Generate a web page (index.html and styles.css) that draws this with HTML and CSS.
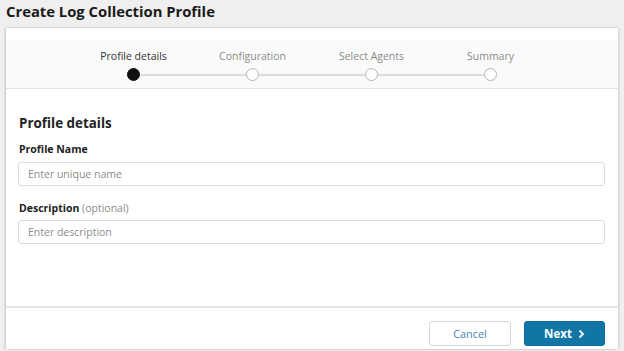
FILE: index.html
```html
<!DOCTYPE html>
<html>
<head>
<meta charset="utf-8">
<link rel="stylesheet" href="styles.css">
</head>
<body>
<h1 class="page-title">Create Log Collection Profile</h1>
<div class="card">
  <div class="card-top"></div>
  <div class="stepper">
    <div class="step active first">
      <div class="step-label">Profile details</div>
      <div class="track"><span class="seg"></span><span class="dot"></span><span class="seg"></span></div>
    </div>
    <div class="step">
      <div class="step-label">Configuration</div>
      <div class="track"><span class="seg"></span><span class="dot"></span><span class="seg"></span></div>
    </div>
    <div class="step">
      <div class="step-label">Select Agents</div>
      <div class="track"><span class="seg"></span><span class="dot"></span><span class="seg"></span></div>
    </div>
    <div class="step last">
      <div class="step-label">Summary</div>
      <div class="track"><span class="seg"></span><span class="dot"></span><span class="seg"></span></div>
    </div>
  </div>
  <div class="content">
    <h2 class="section-title">Profile details</h2>
    <label class="field-label">Profile Name</label>
    <input class="field-input" type="text" placeholder="Enter unique name">
    <label class="field-label desc-label">Description <span class="optional">(optional)</span></label>
    <input class="field-input" type="text" placeholder="Enter description">
  </div>
  <div class="footer">
    <button class="btn btn-cancel">Cancel</button>
    <button class="btn btn-next">Next <svg class="chev" width="8" height="10" viewBox="0 0 8 10"><path d="M2.5 1.5 L6 5 L2.5 8.5" fill="none" stroke="#fff" stroke-width="1.8"/></svg></button>
  </div>
</div>
</body>
</html>
```
FILE: styles.css
```css
html, body {
  margin: 0;
  padding: 0;
}
body {
  background: #efefef;
  font-family: "Open Sans", "Liberation Sans", sans-serif;
  color: #222;
  width: 624px;
  height: 351px;
  overflow: hidden;
}
.page-title {
  margin: 0;
  padding: 0 6px;
  height: 28px;
  line-height: 22px;
  font-size: 14.8px;
  font-weight: 700;
  color: #1a1a1a;
}
.card {
  margin: 0 6px;
  height: 321px;
  background: #fff;
  box-shadow: -1px 0 2px rgba(0,0,0,0.18), 1px 0 2px rgba(0,0,0,0.12);
  display: flex;
  flex-direction: column;
}
.card-top {
  height: 12px;
}
.stepper {
  background: #fafafa;
  border-bottom: 1px solid #e4e4e4;
  display: grid;
  grid-template-columns: repeat(4, 119px);
  justify-content: center;
  padding-top: 8px;
  box-sizing: content-box;
  height: 40px;
}
.step {
  display: flex;
  flex-direction: column;
  align-items: center;
}
.step-label {
  font-size: 10.5px;
  line-height: 16px;
  color: #8a8a8a;
  white-space: nowrap;
}
.step.active .step-label {
  color: #333;
}
.track {
  margin-top: 4px;
  width: 100%;
  height: 13px;
  display: flex;
  align-items: center;
}
.seg {
  flex: 1;
  height: 2px;
  background: #dcdcdc;
}
.step.first .seg:first-child,
.step.last .seg:last-child {
  background: transparent;
}
.dot {
  width: 11px;
  height: 11px;
  border: 1px solid #b5b5b5;
  border-radius: 50%;
  background: #fff;
  flex: none;
}
.step.active .dot {
  background: #111;
  border-color: #111;
}
.content {
  flex: 1;
  padding: 24px 13px 0 12px;
  display: flex;
  flex-direction: column;
  border-bottom: 2px solid #e6e6e6;
}
.section-title {
  margin: 0 0 8px 1px;
  font-size: 13.4px;
  line-height: 20px;
  font-weight: 700;
  color: #222;
}
.field-label {
  font-size: 10.5px;
  line-height: 16px;
  font-weight: 700;
  color: #222;
  margin: 0 0 5px 1px;
}
.desc-label {
  margin-top: 14px;
  margin-bottom: 4px;
}
.optional {
  font-weight: 400;
  color: #8a8a8a;
}
.field-input {
  height: 24px;
  box-sizing: border-box;
  border: 1px solid #dcdcdc;
  border-radius: 3px;
  padding: 0 9px;
  font-family: "Open Sans", "Liberation Sans", sans-serif;
  font-size: 10.5px;
  color: #333;
  background: #fff;
  outline: none;
}
.field-input::placeholder {
  color: #8c8c8c;
}
.footer {
  height: 41px;
  display: flex;
  justify-content: flex-end;
  align-items: flex-start;
  gap: 13px;
  padding: 13px 13px 0 0;
  box-sizing: border-box;
}
.btn {
  height: 25px;
  box-sizing: border-box;
  border-radius: 3px;
  font-family: "Open Sans", "Liberation Sans", sans-serif;
  font-size: 10.8px;
  display: flex;
  align-items: center;
  justify-content: center;
  gap: 5px;
  padding: 0;
}
.btn-cancel {
  width: 82px;
  background: #fff;
  border: 1px solid #d4d4d4;
  color: #3f86b3;
}
.btn-next {
  width: 81px;
  background: #0f76a6;
  border: 1px solid #0c6d9a;
  color: #fff;
  font-weight: 700;
  font-size: 11.5px;
}
.chev {
  display: block;
}
```
